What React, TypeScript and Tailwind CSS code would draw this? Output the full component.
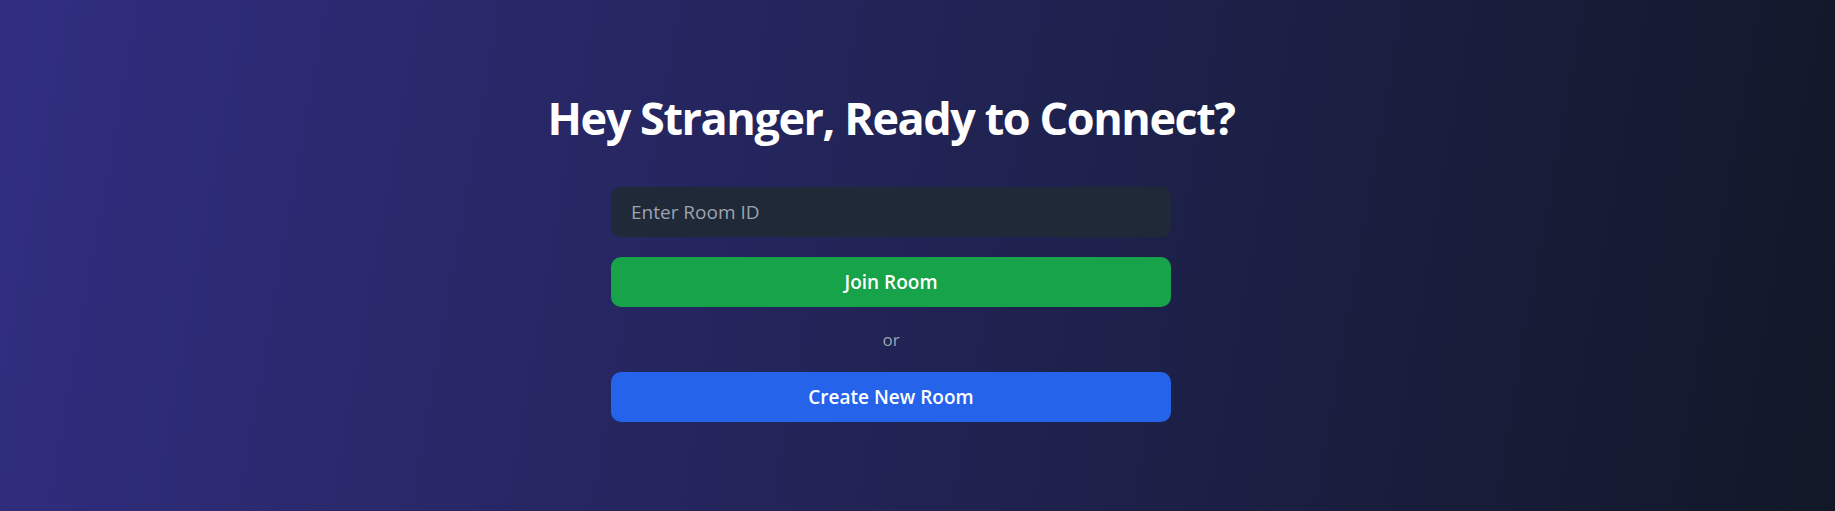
import React, { useState } from "react";

const App: React.FC = () => {
  const [roomId, setRoomId] = useState("");

  return (
    <div
      className="min-h-screen w-full flex flex-col items-center justify-center bg-linear-[100deg] from-[#312e81] to-[#111827] pr-[53px] pt-[4px]"
      style={{ fontFamily: '"Open Sans", "Noto Sans", sans-serif' }}
    >
      <h1 className="text-[45px] leading-[50px] font-bold text-white mb-[44px] tracking-[-0.032em]">
        Hey Stranger, Ready to Connect?
      </h1>
      <div className="w-[560px] flex flex-col gap-[20px]">
        <input
          type="text"
          value={roomId}
          onChange={(e) => setRoomId(e.target.value)}
          placeholder="Enter Room ID"
          className="w-full h-[50px] px-[20px] rounded-[10px] bg-[#1f2937] text-white text-[19px] placeholder:text-[#9ca3af] outline-none"
        />
        <button className="w-full h-[50px] rounded-[10px] bg-[#16a34a] text-white text-[19px] font-semibold">
          Join Room
        </button>
        <div className="text-center text-[17px] leading-[25px] text-[#9ca3af]">or</div>
        <button className="w-full h-[50px] rounded-[10px] bg-[#2563eb] text-white text-[19px] font-semibold">
          Create New Room
        </button>
      </div>
    </div>
  );
};

export default App;
